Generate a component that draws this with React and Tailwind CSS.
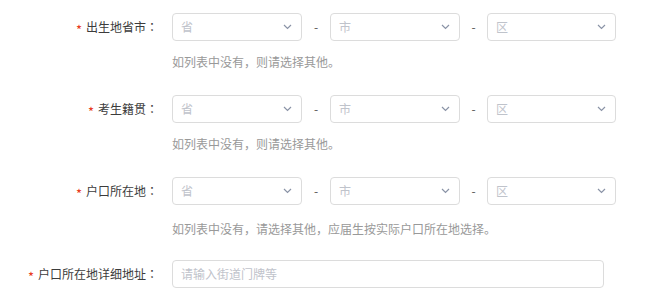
import React from "react";

const font = { fontFamily: '"Noto Sans CJK SC", "Noto Sans", sans-serif' };

function Chevron() {
  return (
    <svg width="9" height="6" viewBox="0 0 9 6" className="shrink-0">
      <path d="M1 1 L4.5 4.5 L8 1" fill="none" stroke="#8a93a6" strokeWidth="1.2" />
    </svg>
  );
}

function Select({ placeholder, w }) {
  return (
    <div className={`${w} h-[28px] border border-[#dcdcdc] rounded-[4px] flex items-center justify-between pl-[8px] pr-[9px] bg-white`}>
      <span className="text-[12px] text-[#bfc3cb] leading-none">{placeholder}</span>
      <Chevron />
    </div>
  );
}

function Label({ text }) {
  return (
    <div className="w-[172px] pr-[14px] flex items-center justify-end text-[12px] text-[#3c3c3c]">
      <span className="text-[#e8391d] mr-[4px] text-[13px] leading-none translate-y-[2px]">*</span>
      <span>{text}</span>
      <span className="[font-family:'Noto_Sans_CJK_JP',sans-serif]">：</span>
    </div>
  );
}

function SelectRow({ label }) {
  return (
    <div className="flex items-center h-[28px]">
      <Label text={label} />
      <Select placeholder="省" w="w-[130px]" />
      <div className="w-[28px] text-center text-[12px] text-[#555]">-</div>
      <Select placeholder="市" w="w-[130px]" />
      <div className="w-[27px] text-center text-[12px] text-[#555]">-</div>
      <Select placeholder="区" w="w-[129px]" />
    </div>
  );
}

function Help({ text, cls }) {
  return (
    <div className={`ml-[172px] text-[12px] leading-[20px] text-[#999] ${cls}`}>{text}</div>
  );
}

export default function App() {
  return (
    <div className="w-[660px] h-[298px] bg-white pt-[13px]" style={font}>
      <SelectRow label="出生地省市" />
      <Help text="如列表中没有，则请选择其他。" cls="mt-[11px] mb-[23px]" />
      <SelectRow label="考生籍贯" />
      <Help text="如列表中没有，则请选择其他。" cls="mt-[11px] mb-[23px]" />
      <SelectRow label="户口所在地" />
      <Help text="如列表中没有，请选择其他，应届生按实际户口所在地选择。" cls="mt-[14px] mb-[21px]" />
      <div className="flex items-center h-[28px]">
        <Label text="户口所在地详细地址" />
        <div className="w-[432px] h-[28px] border border-[#dcdcdc] rounded-[4px] flex items-center pl-[8px]">
          <span className="text-[12px] text-[#bfc3cb]">请输入街道门牌等</span>
        </div>
      </div>
    </div>
  );
}
